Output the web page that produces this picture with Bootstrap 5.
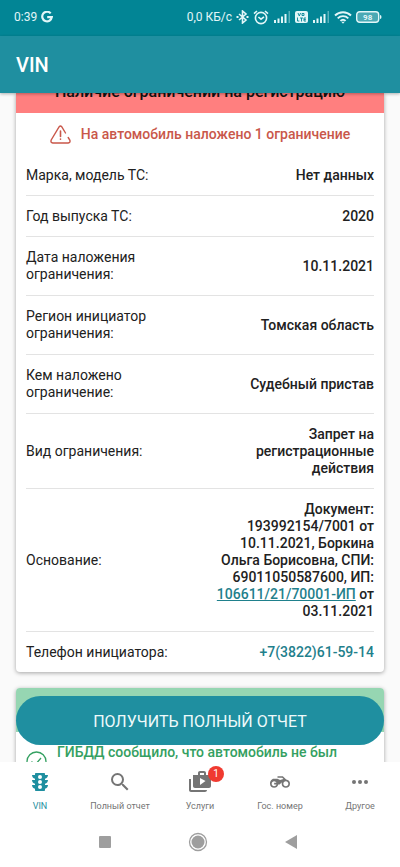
<!DOCTYPE html>
<html lang="ru">
<head>
<meta charset="utf-8">
<meta name="viewport" content="width=device-width, initial-scale=1">
<title>VIN</title>
<link rel="stylesheet" href="https://cdn.jsdelivr.net/npm/bootstrap@5.3.0/dist/css/bootstrap.min.css">
<style>
body { font-family: Roboto, "Noto Sans", sans-serif; font-size: 14px; line-height: 17px; color: #212121; background: #fafafa; }
.status-bar { height: 36px; padding: 0 18px 2px 14px; background: #028595; color: #e2f6f8; font-size: 12px; }
.app-bar { height: 57px; background: #1f8fa0; box-shadow: 0 1px 3px rgba(0,0,0,.3); z-index: 2; }
.app-bar h1 { font-size: 20px; line-height: 24px; font-weight: 500; }
.report-card { border-radius: 4px; box-shadow: 0 1px 4px rgba(0,0,0,.35); }
.report-card.continued { border-radius: 0 0 4px 4px; }
.title-strip { height: 20px; background: #ff7f7f; color: #111; font-size: 16px; line-height: 20px; font-weight: 500; padding-bottom: 11px; }
.title-strip.clear { height: 44px; background: #96d6b2; border-radius: 4px 4px 0 0; }
.warn { color: #c9574a; gap: 10px; padding: 12px 0 11px; font-weight: 500; }
.facts-wrap { padding: 0 10px; }
.facts th, .facts td { padding: 12px 0 11px; border-bottom: 1px solid #e3e3e3; vertical-align: middle; }
.facts th { width: 53%; font-weight: 400; padding-right: 20px; }
.facts td { font-weight: 500; text-align: right; }
.facts .two-line th { padding-bottom: 12px; }
.facts tr:last-child > * { border-bottom: 0; }
.facts a { color: #1f808c; }
.ok-line { color: #34a061; gap: 10px; padding: 12px 10px; font-weight: 500; }
.cta { left: 16px; right: 16px; bottom: 17px; height: 49px; padding-top: 8px; background: #1f8fa0; color: #eefafb; font-size: 16px; }
.cta:hover { background: #1a7f8e; color: #fff; }
.tab-bar { height: 57px; padding-top: 8px; z-index: 2; }
.tab-link { color: #757575; font-size: 9px; line-height: 12px; gap: 6px; }
.tab-link.active { color: #1f8fa0; }
.count { left: 20px; top: -4px; width: 16px; height: 16px; background: #f03a30; font-size: 10px; line-height: 16px; }
.system-bar { height: 48px; padding: 0 102px 2px 98px; }
.system-bar .btn { line-height: 0; }
</style>
<script defer src="https://cdn.jsdelivr.net/npm/bootstrap@5.3.0/dist/js/bootstrap.bundle.min.js"></script>
</head>
<body>
<div class="d-flex flex-column vh-100 overflow-hidden">
  <div class="status-bar d-flex align-items-center justify-content-between flex-shrink-0">
    <div class="d-flex align-items-center gap-1">
      <span>0:39</span>
      <svg width="12" height="12" viewBox="0 0 12 12" fill="none" stroke="currentColor" stroke-width="2.2"><path d="M9.7 2.4A4.8 4.8 0 1 0 10.8 6.2H6.2"/></svg>
    </div>
    <div class="d-flex align-items-center gap-1">
      <span>0,0 КБ/с</span>
      <svg width="13" height="14" viewBox="0 0 13 14" fill="none" stroke="currentColor" stroke-width="1.6"><path d="M3 4l7 6-3.500 3V1L10 4 3 10"/><path d="M.500 7h2M10.500 7h2" stroke-width="1.800"/></svg>
      <svg width="16" height="15" viewBox="0 0 16 15" fill="none" stroke="currentColor" stroke-width="1.600"><circle cx="8" cy="8" r="5.600"/><path d="M1 3.600L4 1M15 3.600L12 1M5.400 7L8 9.200 11 6.800"/></svg>
      <svg width="18" height="12" viewBox="0 0 18 12" fill="currentColor"><path d="M1 9h2v3H1zM4.500 7.500h2V12h-2zM8 5.500h2V12H8zM11.500 3h2v9h-2z"/><path d="M15.500 0h1.500v12h-1.500z" opacity=".4"/></svg>
      <svg width="13" height="12" viewBox="0 0 13 12"><rect width="13" height="12" rx="2" fill="currentColor"/><g fill="none" stroke="#028595" stroke-width=".9"><path d="M3 2l1.300 3L5.600 2M7 2.500h2v2H7zM2.500 6.500V10h1.800M5 7h3M6.500 7v3.500M11 7H9v3h2M9 8.500h1.800"/></g></svg>
      <svg width="18" height="12" viewBox="0 0 18 12" fill="currentColor"><path d="M1 9h2v3H1zM4.500 7.500h2V12h-2zM8 5.500h2V12H8zM11.500 3h2v9h-2z"/><path d="M15.500 0h1.500v12h-1.500z" opacity=".4"/></svg>
      <svg width="18" height="13" viewBox="0 0 18 13" fill="none" stroke="currentColor" stroke-width="1.900"><path d="M1 4.500a11.500 11.500 0 0 1 16 0M3.700 7.300a7.500 7.500 0 0 1 10.600 0M6.400 9.900a3.800 3.800 0 0 1 5.200 0"/><path d="M7.300 10.800h3.400L9 12.800z" fill="currentColor" stroke="none"/></svg>
      <svg width="26" height="12" viewBox="0 0 26 12"><rect x=".7" y=".7" width="22" height="10.600" rx="3" fill="#4aa9b4" stroke="currentColor" stroke-width="1.400"/><path d="M24 4q1.500 0 1.500 2T24 8z" fill="currentColor"/><text x="11.700" y="9" text-anchor="middle" font-size="8" font-weight="700" fill="currentColor">98</text></svg>
    </div>
  </div>

  <header class="app-bar navbar p-0 px-3 flex-shrink-0 position-relative">
    <h1 class="m-0 text-white">VIN</h1>
  </header>

  <main class="position-relative flex-grow-1 overflow-hidden">
    <div class="px-3">
      <section class="report-card continued bg-white mb-3">
        <h2 class="title-strip d-flex align-items-end justify-content-center overflow-hidden m-0 text-nowrap">Наличие ограничений на регистрацию</h2>
        <div class="warn d-flex align-items-center justify-content-center">
          <svg width="21" height="19" viewBox="0 0 21 19" fill="none" stroke="currentColor" stroke-width="1.400" stroke-linecap="round"><path d="M15.500 8L11.700 1.700Q10.500.300 9.200 1.700L1.200 15Q.300 17.700 2.800 18H18.200Q20.700 17.700 19.800 15L18.200 12.500"/><path d="M10.500 6v5.500M10.500 14v.3" stroke-width="1.600"/></svg>
          <span>На автомобиль наложено 1 ограничение</span>
        </div>
        <div class="facts-wrap">
        <table class="facts w-100">
          <tbody>
            <tr><th scope="row">Марка, модель ТС:</th><td>Нет данных</td></tr>
            <tr><th scope="row">Год выпуска ТС:</th><td>2020</td></tr>
            <tr class="two-line"><th scope="row">Дата наложения ограничения:</th><td>10.11.2021</td></tr>
            <tr class="two-line"><th scope="row">Регион инициатор ограничения:</th><td>Томская область</td></tr>
            <tr class="two-line"><th scope="row">Кем наложено ограничение:</th><td>Судебный пристав</td></tr>
            <tr><th scope="row">Вид ограничения:</th><td>Запрет на регистрационные действия</td></tr>
            <tr><th scope="row">Основание:</th><td>Документ: 193992154/7001 от 10.11.2021, Боркина Ольга Борисовна, СПИ: 69011050587600, ИП: <a class="text-nowrap" href="#">106611/21/70001-ИП</a> от 03.11.2021</td></tr>
            <tr><th scope="row">Телефон инициатора:</th><td><a class="text-decoration-none" href="tel:+73822615914">+7(3822)61-59-14</a></td></tr>
          </tbody>
        </table>
        </div>
      </section>
      <section class="report-card bg-white">
        <div class="title-strip clear"></div>
        <div class="ok-line d-flex align-items-center">
          <svg class="flex-shrink-0" width="21" height="21" viewBox="0 0 21 21" fill="none" stroke="currentColor" stroke-width="1.300"><circle cx="10.500" cy="10.500" r="9.500"/><path d="M5.500 10.500l3.500 3.500 6-7"/></svg>
          <span>ГИБДД сообщило, что автомобиль не был<br>найден в розыске</span>
        </div>
      </section>
    </div>
    <button type="button" class="cta btn rounded-pill border-0 position-absolute">ПОЛУЧИТЬ ПОЛНЫЙ ОТЧЕТ</button>
  </main>

  <nav class="tab-bar d-flex bg-white flex-shrink-0 position-relative">
    <a href="#" class="tab-link active col d-flex flex-column align-items-center text-decoration-none" aria-current="page">
      <svg width="24" height="24" viewBox="0 0 24 24" fill="currentColor"><path fill-rule="evenodd" d="M20 10h-3V8.860c1.720-.450 3-2 3-3.860h-3V4c0-.550-.450-1-1-1H8c-.550 0-1 .450-1 1v1H4c0 1.860 1.280 3.410 3 3.860V10H4c0 1.860 1.280 3.410 3 3.860V15H4c0 1.860 1.280 3.410 3 3.860V20c0 .550.450 1 1 1h8c.550 0 1-.450 1-1v-1.140c1.720-.450 3-2 3-3.860h-3v-1.140c1.720-.450 3-2 3-3.860zm-8 9a2 2 0 1 1 0-4 2 2 0 0 1 0 4zm0-5a2 2 0 1 1 0-4 2 2 0 0 1 0 4zm0-5a2 2 0 1 1 0-4 2 2 0 0 1 0 4z"/></svg>
      <span>VIN</span></a>
    <a href="#" class="tab-link col d-flex flex-column align-items-center text-decoration-none">
      <svg width="24" height="24" viewBox="0 0 24 24" fill="currentColor"><path d="M15.500 14h-.790l-.280-.270A6.470 6.470 0 0 0 16 9.500 6.500 6.500 0 1 0 9.500 16c1.610 0 3.090-.590 4.230-1.570l.270.280v.790l5 4.990L20.490 19l-4.990-5zm-6 0C7.010 14 5 11.990 5 9.500S7.010 5 9.500 5 14 7.010 14 9.500 11.990 14 9.500 14z"/></svg>
      <span>Полный отчет</span></a>
    <a href="#" class="tab-link col d-flex flex-column align-items-center text-decoration-none">
      <span class="position-relative d-flex">
        <svg width="24" height="24" viewBox="0 0 24 24" fill="currentColor"><path fill-rule="evenodd" d="M3 9H1v11c0 1.110.890 2 2 2h14c1.110 0 2-.890 2-2H3V9zm15-4V3c0-1.110-.890-2-2-2h-4c-1.110 0-2 .890-2 2v2H5v11c0 1.110.890 2 2 2h14c1.110 0 2-.890 2-2V5h-5zm-6-2h4v2h-4V3zm0 12V8l5.500 3-5.500 4z"/></svg>
        <span class="count position-absolute rounded-circle text-white text-center">1</span>
      </span>
      <span>Услуги</span></a>
    <a href="#" class="tab-link col d-flex flex-column align-items-center text-decoration-none">
      <svg width="20" height="24" viewBox="0 0 24 24" fill="currentColor"><path d="M19.440 9.030L15.410 5H9v2h5.600l1.500 1.500-4 1L9 8H4.500C2 8 0 10.800 0 14c0 2.800 2.200 5 5 5 2.460 0 4.450-1.690 4.900-4h1.650l2.770-2.770c-.210.540-.320 1.140-.320 1.770 0 2.800 2.200 5 5 5s5-2.200 5-5c0-2.650-1.970-4.770-4.560-4.970zM7.820 15C7.400 16.150 6.280 17 5 17c-1.630 0-3-1.370-3-3s1.370-3 3-3c1.280 0 2.400.850 2.820 2H5v2h2.820zM19 17c-1.660 0-3-1.340-3-3s1.340-3 3-3 3 1.340 3 3-1.340 3-3 3z"/></svg>
      <span>Гос. номер</span></a>
    <a href="#" class="tab-link col d-flex flex-column align-items-center text-decoration-none">
      <svg width="24" height="24" viewBox="0 0 24 24" fill="currentColor"><circle cx="6" cy="12" r="2"/><circle cx="12" cy="12" r="2"/><circle cx="18" cy="12" r="2"/></svg>
      <span>Другое</span></a>
  </nav>

  <div class="system-bar d-flex align-items-center justify-content-between bg-white flex-shrink-0">
    <button type="button" class="btn p-0 border-0" aria-label="Недавние"><svg width="14" height="14"><rect x="1" y="1" width="12" height="12" rx="1" fill="#9e9e9e"/></svg></button>
    <button type="button" class="btn p-0 border-0" aria-label="Домой"><svg width="20" height="20"><circle cx="10" cy="10" r="8.500" fill="none" stroke="#9e9e9e" stroke-width="1.300"/><circle cx="10" cy="10" r="6.500" fill="#9e9e9e"/></svg></button>
    <button type="button" class="btn p-0 border-0" aria-label="Назад"><svg width="14" height="16"><path d="M13 1v14L1 8z" fill="#9e9e9e"/></svg></button>
  </div>
</div>
</body>
</html>
